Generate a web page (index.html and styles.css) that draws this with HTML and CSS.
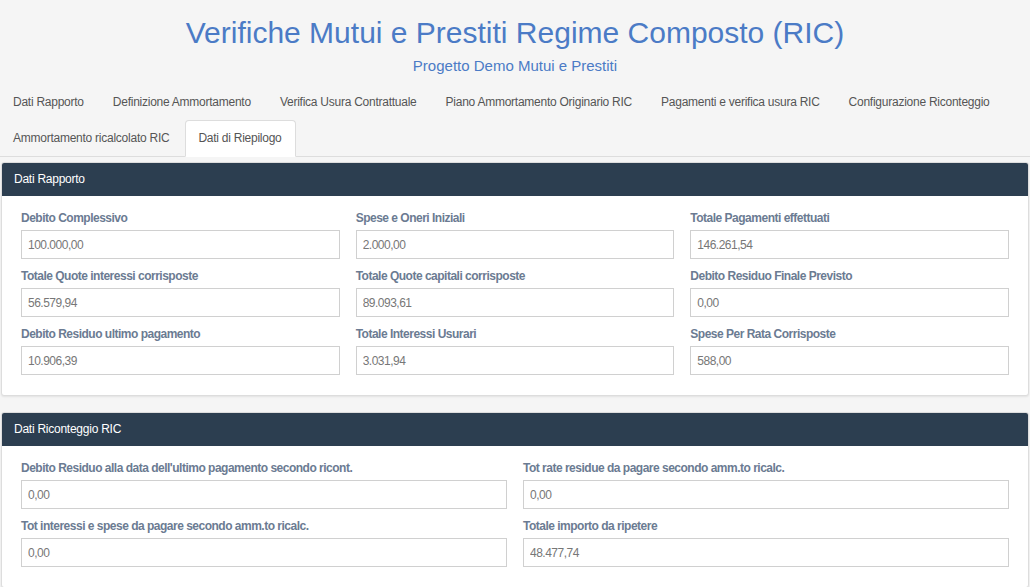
FILE: index.html
```html
<!DOCTYPE html>
<html lang="it">
<head>
    <meta charset="UTF-8">
    <meta name="viewport" content="width=device-width, initial-scale=1.0">
    <title>Verifiche Mutui e Prestiti - Dati di Riepilogo</title>
    <link rel="stylesheet" href="styles.css">
</head>
<body>
    <!-- Intestazione -->
    <header class="page-header">
        <h1>Verifiche Mutui e Prestiti Regime Composto (RIC)</h1>
        <p>Progetto Demo Mutui e Prestiti</p>
    </header>

    <!-- Schede -->
    <ul class="nav-tabs">
        <li><a href="#">Dati Rapporto</a></li>
        <li><a href="#">Definizione Ammortamento</a></li>
        <li><a href="#">Verifica Usura Contrattuale</a></li>
        <li><a href="#">Piano Ammortamento Originario RIC</a></li>
        <li><a href="#">Pagamenti e verifica usura RIC</a></li>
        <li><a href="#">Configurazione Riconteggio</a></li>
        <li><a href="#">Ammortamento ricalcolato RIC</a></li>
        <li class="active"><a href="#">Dati di Riepilogo</a></li>
    </ul>

    <!-- Dati Rapporto -->
    <section class="panel">
        <div class="panel-heading">Dati Rapporto</div>
        <div class="panel-body grid-3">
            <div class="field">
                <label>Debito Complessivo</label>
                <input type="text" value="100.000,00" readonly>
            </div>
            <div class="field">
                <label>Spese e Oneri Iniziali</label>
                <input type="text" value="2.000,00" readonly>
            </div>
            <div class="field">
                <label>Totale Pagamenti effettuati</label>
                <input type="text" value="146.261,54" readonly>
            </div>
            <div class="field">
                <label>Totale Quote interessi corrisposte</label>
                <input type="text" value="56.579,94" readonly>
            </div>
            <div class="field">
                <label>Totale Quote capitali corrisposte</label>
                <input type="text" value="89.093,61" readonly>
            </div>
            <div class="field">
                <label>Debito Residuo Finale Previsto</label>
                <input type="text" value="0,00" readonly>
            </div>
            <div class="field">
                <label>Debito Residuo ultimo pagamento</label>
                <input type="text" value="10.906,39" readonly>
            </div>
            <div class="field">
                <label>Totale Interessi Usurari</label>
                <input type="text" value="3.031,94" readonly>
            </div>
            <div class="field">
                <label>Spese Per Rata Corrisposte</label>
                <input type="text" value="588,00" readonly>
            </div>
        </div>
    </section>

    <!-- Dati Riconteggio -->
    <section class="panel">
        <div class="panel-heading">Dati Riconteggio RIC</div>
        <div class="panel-body grid-2">
            <div class="field">
                <label>Debito Residuo alla data dell'ultimo pagamento secondo ricont.</label>
                <input type="text" value="0,00" readonly>
            </div>
            <div class="field">
                <label>Tot rate residue da pagare secondo amm.to ricalc.</label>
                <input type="text" value="0,00" readonly>
            </div>
            <div class="field">
                <label>Tot interessi e spese da pagare secondo amm.to ricalc.</label>
                <input type="text" value="0,00" readonly>
            </div>
            <div class="field">
                <label>Totale importo da ripetere</label>
                <input type="text" value="48.477,74" readonly>
            </div>
        </div>
    </section>
</body>
</html>
```

FILE: styles.css
```css
body {
    margin: 0;
    background: #f5f5f5;
    font-family: "Liberation Sans", Arial, sans-serif;
    font-size: 12px;
    color: #555;
}

/* Intestazione */
.page-header {
    text-align: center;
    padding-top: 15px;
}

.page-header h1 {
    margin: 0;
    font-size: 30px;
    line-height: 36px;
    font-weight: normal;
    color: #4b7bc6;
}

.page-header p {
    margin: 5px 0 0;
    font-size: 15px;
    line-height: 20px;
    color: #4b7bc6;
}

/* Schede */
.nav-tabs {
    list-style: none;
    margin: 8px 0 0;
    padding: 0;
    display: flex;
    flex-wrap: wrap;
    border-bottom: 1px solid #ddd;
}

.nav-tabs li {
    margin-right: 2px;
    margin-bottom: -1px;
}

.nav-tabs a {
    display: block;
    padding: 9px 13px 9px 12px;
    line-height: 17px;
    letter-spacing: -0.25px;
    color: #555;
    text-decoration: none;
    border: 1px solid transparent;
    border-radius: 4px 4px 0 0;
}

.nav-tabs .active a {
    background: #fff;
    border-color: #ddd #ddd transparent;
}

/* Pannelli */
.panel {
    margin: 5px 1px 16px;
    background: #fff;
    border: 1px solid #ddd;
    border-radius: 3px;
    box-shadow: 0 1px 2px rgba(0, 0, 0, 0.08);
}

.panel-heading {
    background: #2c3e50;
    color: #fff;
    padding: 8px 12px;
    line-height: 17px;
    letter-spacing: -0.25px;
    border-radius: 2px 2px 0 0;
}

.panel-body {
    display: grid;
    column-gap: 16px;
    row-gap: 9px;
    padding: 14px 19px 20px;
}

.grid-3 {
    grid-template-columns: repeat(3, 1fr);
}

.grid-2 {
    grid-template-columns: repeat(2, 1fr);
}

.field label {
    display: block;
    margin-bottom: 3px;
    line-height: 17px;
    font-weight: bold;
    letter-spacing: -0.5px;
    color: #6b7b92;
}

.field input {
    display: block;
    box-sizing: border-box;
    width: 100%;
    height: 29px;
    padding: 0 6px;
    border: 1px solid #d0d0d0;
    background: #fff;
    font-family: inherit;
    font-size: 12px;
    letter-spacing: -0.5px;
    color: #777;
}
```
